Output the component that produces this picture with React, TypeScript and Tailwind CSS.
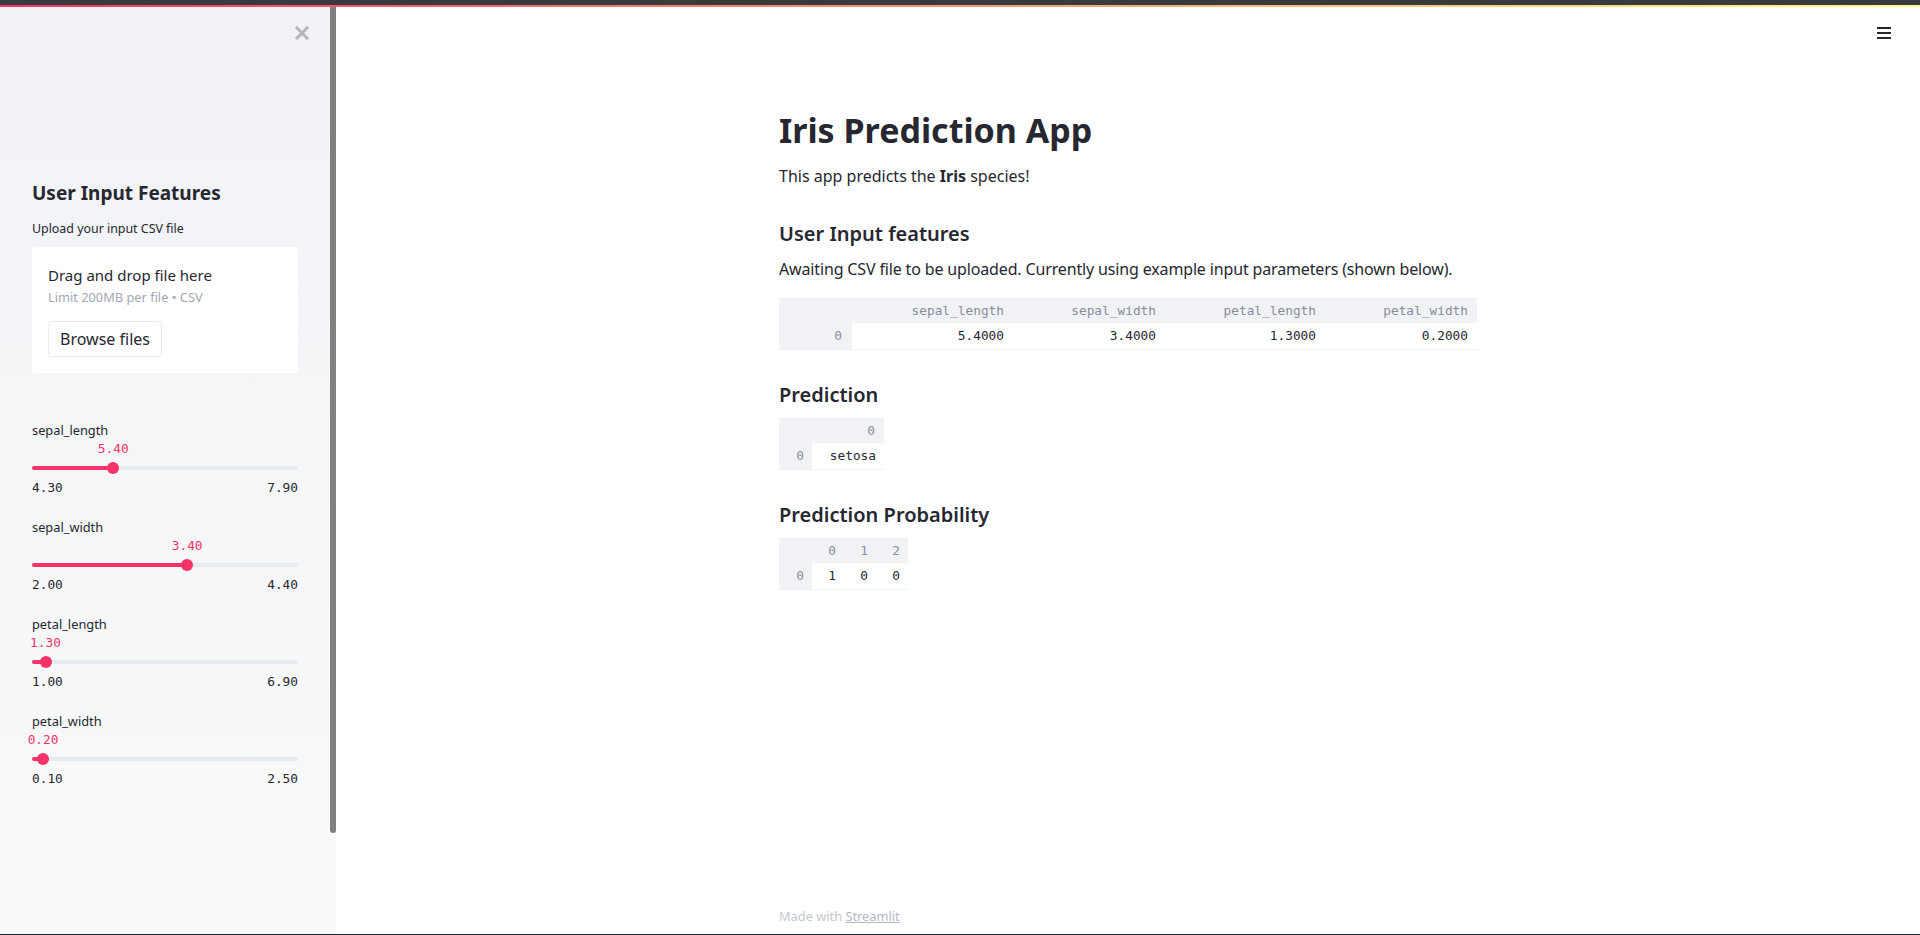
import React from "react";

const SANS = "font-['Noto_Sans',sans-serif]";
const MONO = "font-['DejaVu_Sans_Mono',monospace]";

function Slider({ label, value, min, max }: { label: string; value: number; min: number; max: number }) {
  const frac = (value - min) / (max - min);
  const left = frac * 266;
  return (
    <div className="flex flex-col h-[97px]">
      <div className="h-[16px] leading-[16px] text-[12.8px] text-[#262730]">{label}</div>
      <div className="relative h-[16px] mt-[3px]">
        <span
          className={`absolute top-0 leading-[16px] text-[12.8px] text-[#f63366] ${MONO} -translate-x-1/2`}
          style={{ left }}
        >
          {value.toFixed(2)}
        </span>
      </div>
      <div className="relative h-[12px] mt-[5px] flex items-center">
        <div className="w-full h-[4px] rounded-full bg-[#e6eaf1]" />
        <div className="absolute left-0 h-[4px] rounded-full bg-[#f63366]" style={{ width: left }} />
        <div
          className="absolute top-0 w-[12px] h-[12px] rounded-full bg-[#f63366] -translate-x-1/2"
          style={{ left }}
        />
      </div>
      <div className={`mt-[6px] h-[16px] leading-[16px] flex justify-between text-[12.8px] text-[#262730] ${MONO}`}>
        <span>{min.toFixed(2)}</span>
        <span>{max.toFixed(2)}</span>
      </div>
    </div>
  );
}

function MainTable() {
  const head = ["", "sepal_length", "sepal_width", "petal_length", "petal_width"];
  const row = ["0", "5.4000", "3.4000", "1.3000", "0.2000"];
  return (
    <div className={`grid grid-cols-[73px_161px_152px_160px_152px] w-[698px] border-r border-b border-[#eceef3] text-[12.8px] ${MONO}`}>
      {head.map((h, i) => (
        <div key={"h" + i} className="h-[25px] leading-[25px] bg-[#f0f2f6] text-right pr-[9px] text-[#8a8d99]">
          {h}
        </div>
      ))}
      {row.map((c, i) => (
        <div
          key={"r" + i}
          className={
            i === 0
              ? "h-[26px] leading-[26px] bg-[#f0f2f6] text-right pr-[10px] text-[#8a8d99]"
              : "h-[26px] leading-[26px] bg-white text-right pr-[9px] text-[#262730]"
          }
        >
          {c}
        </div>
      ))}
    </div>
  );
}

function PredTable() {
  return (
    <div className={`grid grid-cols-[33px_72px] w-[105px] border-r border-b border-[#eceef3] text-[12.8px] ${MONO}`}>
      <div className="h-[25px] bg-[#f0f2f6]" />
      <div className="h-[25px] leading-[25px] bg-[#f0f2f6] text-right pr-[9px] text-[#8a8d99]">0</div>
      <div className="h-[26px] leading-[26px] bg-[#f0f2f6] text-right pr-[8px] text-[#8a8d99]">0</div>
      <div className="h-[26px] leading-[26px] bg-white text-right pr-[8px] text-[#262730]">setosa</div>
    </div>
  );
}

function ProbTable() {
  return (
    <div className={`grid grid-cols-[33px_32px_32px_32px] w-[129px] border-r border-b border-[#eceef3] text-[12.8px] ${MONO}`}>
      <div className="h-[25px] bg-[#f0f2f6]" />
      {["0", "1", "2"].map((h) => (
        <div key={h} className="h-[25px] leading-[25px] bg-[#f0f2f6] text-right pr-[8px] text-[#8a8d99]">
          {h}
        </div>
      ))}
      <div className="h-[26px] leading-[26px] bg-[#f0f2f6] text-right pr-[8px] text-[#8a8d99]">0</div>
      {["1", "0", "0"].map((c, i) => (
        <div key={i} className="h-[26px] leading-[26px] bg-white text-right pr-[8px] text-[#262730]">
          {c}
        </div>
      ))}
    </div>
  );
}

export default function App() {
  return (
    <div className={`w-[1920px] h-[935px] flex flex-col overflow-hidden bg-white ${SANS} text-[#262730]`}>
      <div className="h-[5px] bg-[#393a3e] shrink-0" />
      <div className="h-[2px] bg-[linear-gradient(90deg,#f63366,#fffd80)] shrink-0" />
      <div className="flex flex-1 min-h-0">
        <aside className="w-[336px] shrink-0 flex bg-[linear-gradient(180deg,#f0f2f6,#fafafa)]">
          <div className="w-[330px] flex flex-col">
            <div className="flex justify-end pr-[21px] pt-[19px]">
              <svg width="14" height="14" viewBox="0 0 14 14">
                <path d="M2 2 L12 12 M12 2 L2 12" stroke="#b4b6bb" strokeWidth="3" strokeLinecap="square" />
              </svg>
            </div>
            <div className="px-8 flex flex-col">
              <div className="mt-[139px] h-[28px] leading-[28px] text-[19px] font-bold text-[#262730]">
                User Input Features
              </div>
              <div className="mt-[14px] h-[16px] leading-[16px] text-[12.4px] text-[#262730]">
                Upload your input CSV file
              </div>
              <div className="mt-[10px] h-[126px] bg-white rounded-[4px] px-4 pt-4 flex flex-col">
                <div className="h-[24px] leading-[24px] text-[15px] text-[#262730]">Drag and drop file here</div>
                <div className="mt-[2px] h-[16px] leading-[16px] text-[12.8px] text-[#a3a8b4]">
                  Limit 200MB per file • CSV
                </div>
                <div className="mt-4">
                  <div className="inline-flex items-center justify-center w-[114px] h-[36px] border border-[#e6eaf1] rounded-[4px] text-[16px] text-[#262730] bg-white">
                    Browse files
                  </div>
                </div>
              </div>
              <div className="mt-[49px] flex flex-col">
                <Slider label="sepal_length" value={5.4} min={4.3} max={7.9} />
                <Slider label="sepal_width" value={3.4} min={2.0} max={4.4} />
                <Slider label="petal_length" value={1.3} min={1.0} max={6.9} />
                <Slider label="petal_width" value={0.2} min={0.1} max={2.5} />
              </div>
            </div>
          </div>
          <div className="w-[6px]">
            <div className="h-[826px] bg-[#7f7f7f] rounded-b-[3px]" />
          </div>
        </aside>
        <main className="flex-1 relative flex flex-col">
          <div className="absolute top-[20px] right-[29px]">
            <svg width="14" height="12" viewBox="0 0 14 12">
              <path d="M0 1 H14 M0 6 H14 M0 11 H14" stroke="#262730" strokeWidth="2" />
            </svg>
          </div>
          <div className="w-[698px] mx-auto pt-[101px] flex flex-col">
            <h1 className="h-[44px] leading-[44px] text-[34px] font-bold text-[#262730]">Iris Prediction App</h1>
            <p className="mt-[12px] h-[24px] leading-[24px] text-[16px]">
              This app predicts the <b className="font-bold">Iris</b> species!
            </p>
            <h3 className="mt-[32px] h-[28px] leading-[28px] text-[20px] font-semibold">User Input features</h3>
            <p className="mt-[9px] h-[24px] leading-[24px] text-[16px] tracking-[-0.15px]">
              Awaiting CSV file to be uploaded. Currently using example input parameters (shown below).
            </p>
            <div className="mt-[17px]">
              <MainTable />
            </div>
            <h3 className="mt-[31px] h-[28px] leading-[28px] text-[20px] font-semibold">Prediction</h3>
            <div className="mt-[9px]">
              <PredTable />
            </div>
            <h3 className="mt-[31px] h-[28px] leading-[28px] text-[20px] font-semibold">Prediction Probability</h3>
            <div className="mt-[9px]">
              <ProbTable />
            </div>
          </div>
          <div className="mt-auto w-[698px] mx-auto pb-[10px] h-[26px] leading-[16px] text-[12.8px] text-[#c4c8d2]">
            Made with <span className="underline text-[#b3b7c4]">Streamlit</span>
          </div>
        </main>
      </div>
      <div className="h-[1px] bg-[#1f2433] shrink-0" />
    </div>
  );
}
